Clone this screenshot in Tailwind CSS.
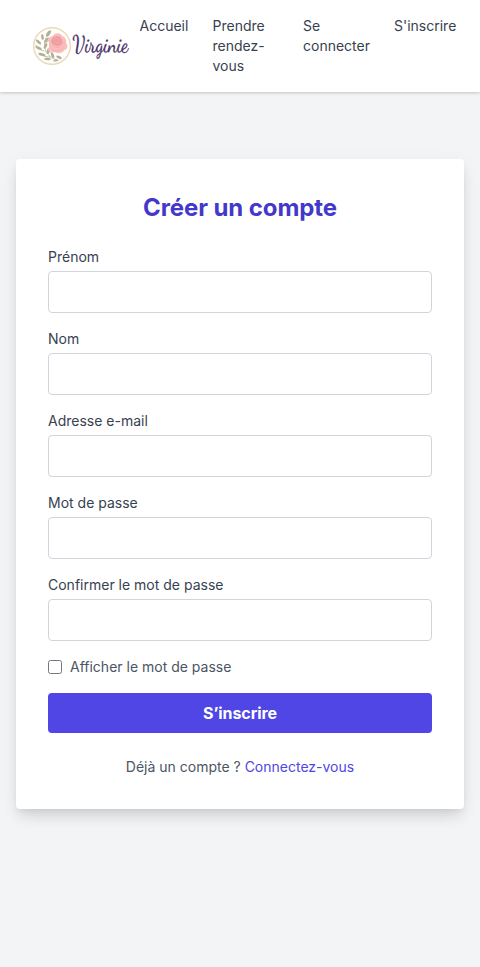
<!DOCTYPE html>
<html lang="fr">
<head>
<meta charset="utf-8">
<meta name="viewport" content="width=device-width, initial-scale=1">
<title>Créer un compte</title>
<script src="https://cdn.jsdelivr.net/npm/@tailwindcss/browser@4"></script>
</head>
<body class="flex min-h-screen flex-col bg-[#f3f4f6] font-['Inter',sans-serif] text-sm text-[#374151]">
<header class="flex h-[92px] shrink-0 bg-white py-4 pr-6 pl-6 shadow-[0_1px_3px_rgba(0,0,0,0.2)]">
  <a href="#" class="block h-[60px] w-[115.5px] shrink-0" aria-label="Virginie">
    <svg width="115" height="60" viewBox="0 0 115 60" class="overflow-visible">
      <circle cx="28" cy="30" r="18.3" fill="#fffefb" stroke="#e8d9bb" stroke-width="1.4"/>
      <g fill="none" stroke="#b3af94" stroke-width=".8" stroke-linecap="round">
        <path d="M22 22C18 31 22 41 33 44M20 35C15 34 13 31 12 29M26 41C20 41 17 39 15 37M21 28L26 23"/>
      </g>
      <g fill="#b1af95">
        <ellipse cx="24.5" cy="17.5" rx="1.6" ry="3.8" transform="rotate(35 24.5 17.5)"/>
        <ellipse cx="18.5" cy="21" rx="1.3" ry="3" transform="rotate(-8 18.5 21)"/>
        <ellipse cx="22.5" cy="24" rx="1.3" ry="3.2" transform="rotate(42 22.5 24)"/>
        <ellipse cx="14.5" cy="26" rx="1.3" ry="3.2" transform="rotate(-48 14.5 26)"/>
        <ellipse cx="21.5" cy="30" rx="1.3" ry="3" transform="rotate(32 21.5 30)"/>
        <ellipse cx="14.5" cy="32" rx="1.3" ry="3.4" transform="rotate(-65 14.5 32)"/>
        <ellipse cx="24.3" cy="35" rx="1.4" ry="3.1" transform="rotate(8 24.3 35)"/>
        <ellipse cx="18" cy="38.5" rx="1.4" ry="3.6" transform="rotate(-78 18 38.5)"/>
        <ellipse cx="28.5" cy="39.3" rx="1.4" ry="3" transform="rotate(-24 28.5 39.3)"/>
        <ellipse cx="23.5" cy="43" rx="1.2" ry="3.4" transform="rotate(-86 23.5 43)"/>
        <ellipse cx="35" cy="41.3" rx="1.3" ry="3" transform="rotate(-65 35 41.3)"/>
        <ellipse cx="32" cy="44.5" rx=".9" ry="2.8" transform="rotate(82 32 44.5)"/>
      </g>
      <path d="M25 27C23 22 27 20 29 20C31 16 37 17 38 20C42 21 43 25 42 27C45 30 43 34 40.5 34C38.5 37.5 33 38 31 36C27 38 22 35 25 31Z" fill="#f8bfbe"/>
      <path d="M28 23C31 18 37 20 38 24C40 28 34 32 30 29C26 27 27 25 28 23Z" fill="#f29da1"/>
      <path d="M30 24C32 21 36 23 35 25C34 28 30 27 31 25M28 29C32 34 38 31 40 26M26 31C30 37 37 35 40 31" fill="none" stroke="#f5aaab" stroke-width=".9"/>
      <text transform="translate(49.5 36) skewX(5)" x="0" y="0" textLength="55" lengthAdjust="spacingAndGlyphs" font-family="'Z003','Dancing Script','Lato',cursive" font-size="24" fill="#493069" stroke="#493069" stroke-width=".3">Virginie</text>
    </svg>
  </a>
  <nav class="flex gap-6 leading-5">
    <a href="#" class="w-[49px]">Accueil</a>
    <a href="#" class="w-[66.5px]">Prendre rendez-vous</a>
    <a href="#" class="w-[67px]">Se connecter</a>
    <a href="#" class="whitespace-nowrap">S'inscrire</a>
  </nav>
</header>
<main class="flex flex-1 items-start justify-center px-4 pt-[67px]">
  <section class="w-full max-w-md rounded bg-white px-8 pt-[33px] pb-8 shadow-[0_10px_15px_-3px_rgba(0,0,0,0.1),0_4px_6px_-2px_rgba(0,0,0,0.06),0_4px_18px_rgba(0,0,0,0.05)]">
    <h1 class="mb-[23px] text-center text-2xl leading-8 font-bold tracking-[-0.004em] text-[#4338ca]">Créer un compte</h1>
    <form class="flex flex-col gap-4">
      <label class="block"><span class="mb-1 block leading-5">Prénom</span><input type="text" class="block h-[42px] w-full rounded border border-[#d1d5db] px-3"></label>
      <label class="block"><span class="mb-1 block leading-5">Nom</span><input type="text" class="block h-[42px] w-full rounded border border-[#d1d5db] px-3"></label>
      <label class="block"><span class="mb-1 block leading-5">Adresse e-mail</span><input type="email" class="block h-[42px] w-full rounded border border-[#d1d5db] px-3"></label>
      <label class="block"><span class="mb-1 block leading-5">Mot de passe</span><input type="password" class="block h-[42px] w-full rounded border border-[#d1d5db] px-3"></label>
      <label class="block"><span class="mb-1 block leading-5">Confirmer le mot de passe</span><input type="password" class="block h-[42px] w-full rounded border border-[#d1d5db] px-3"></label>
      <label class="flex h-5 items-center gap-2 text-[#4b5563]"><input type="checkbox" class="size-3.5 appearance-none rounded-[2.5px] border border-[#767680] bg-white checked:bg-[#4f46e5]">Afficher le mot de passe</label>
      <button type="button" class="h-10 rounded bg-[#4f46e5] text-base font-bold tracking-[-0.005em] text-white">S’inscrire</button>
    </form>
    <p class="mt-6 text-center leading-5 text-[#4b5563]">Déjà un compte ? <a href="#" class="text-[#4f46e5]">Connectez-vous</a></p>
  </section>
</main>
</body>
</html>
